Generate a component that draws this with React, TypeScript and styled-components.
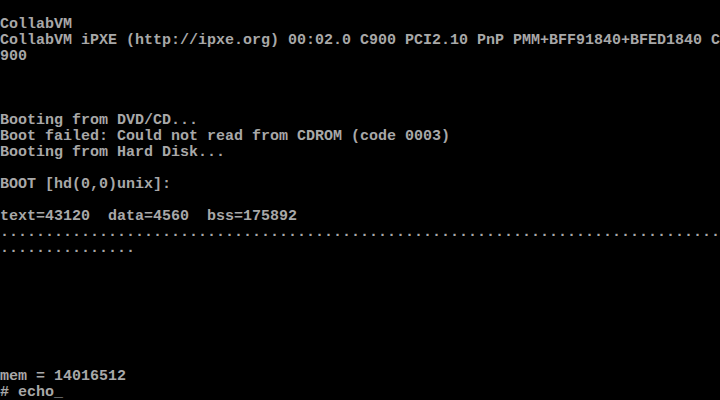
import React from "react";
import styled, { createGlobalStyle } from "styled-components";

const Global = createGlobalStyle`
  html, body { margin: 0; padding: 0; background: #000; }
  #root { width: 720px; height: 400px; }
`;

const Screen = styled.div`
  width: 720px;
  height: 400px;
  background: #000;
  color: #a8a8a8;
  font-family: "Liberation Mono", "DejaVu Sans Mono", monospace;
  font-size: 15px;
  font-weight: bold;
  overflow: hidden;
  display: flex;
  flex-direction: column;
`;

const Row = styled.div`
  height: 16px;
  line-height: 18px;
  white-space: pre;
  flex: none;
`;

const lines: string[] = [
  "",
  "CollabVM",
  "CollabVM iPXE (http://ipxe.org) 00:02.0 C900 PCI2.10 PnP PMM+BFF91840+BFED1840 C",
  "900",
  "",
  "",
  "",
  "Booting from DVD/CD...",
  "Boot failed: Could not read from CDROM (code 0003)",
  "Booting from Hard Disk...",
  "",
  "BOOT [hd(0,0)unix]:",
  "",
  "text=43120  data=4560  bss=175892",
  ".".repeat(80),
  ".".repeat(15),
  "",
  "",
  "",
  "",
  "",
  "",
  "",
  "mem = 14016512",
  "# echo_",
];

export default function App() {
  return (
    <>
      <Global />
      <Screen>
        {lines.map((l, i) => (
          <Row key={i}>{l}</Row>
        ))}
      </Screen>
    </>
  );
}
